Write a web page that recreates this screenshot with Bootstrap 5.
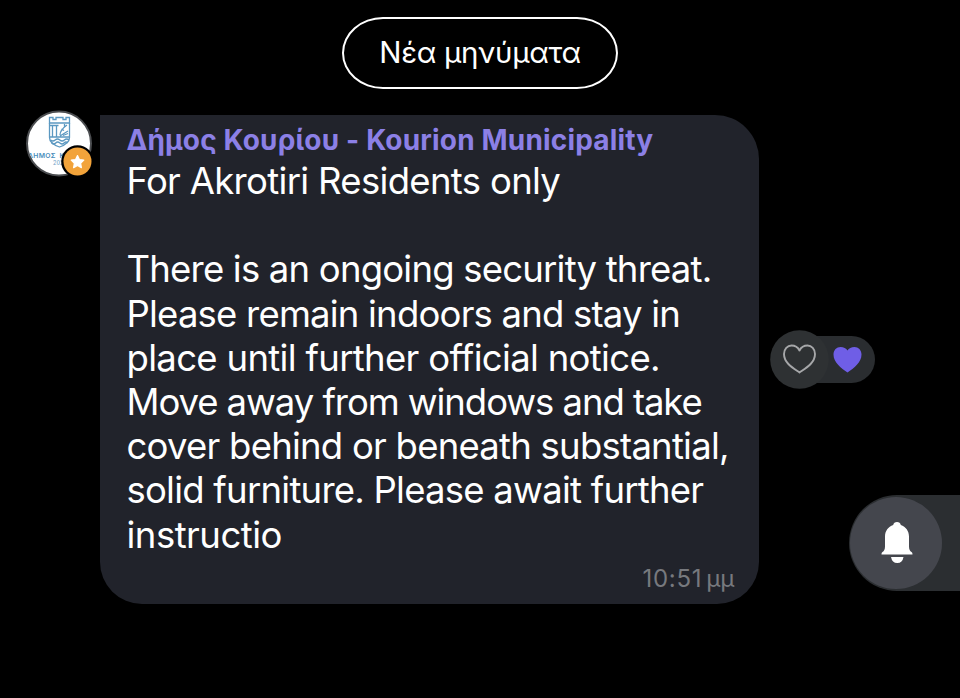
<!DOCTYPE html>
<html lang="el">
<head>
<meta charset="utf-8">
<meta name="viewport" content="width=device-width, initial-scale=1">
<title>Kourion Municipality</title>
<link href="https://cdn.jsdelivr.net/npm/bootstrap@5.3.0/dist/css/bootstrap.min.css" rel="stylesheet">
<style>
body{background:#000;color:#fff;font-family:Inter,"Liberation Sans",sans-serif;width:960px;height:698px;overflow:hidden}
.new-msgs{margin-top:16.5px;width:276px;height:72px;border:2.5px solid #fff;border-radius:41px/36px;font-size:29.5px;line-height:1;letter-spacing:-.3px}
.thread{padding-left:26px;margin-top:26.5px}
.avatar{width:66px;height:68px;margin-top:-5px}
.bubble{margin-left:8.3px;width:658.7px;height:489px;background:#21232b;border-radius:0 44px 42px 42px;padding:5px 24.7px 0 26.2px}
.sender{color:#8c80e6;font-size:28px;font-weight:700;line-height:40px;letter-spacing:.17px}
.message{font-size:36.5px;line-height:44.2px;margin-top:-1px;letter-spacing:-.76px}
.tight-1{letter-spacing:-.79px}
.tight-2{letter-spacing:-1.07px}
.loose-1{letter-spacing:-.68px}
.loose-2{letter-spacing:-.5px}
.stamp{font-size:24px;line-height:30px;color:#77797e;margin-top:7px}
.clock{letter-spacing:.7px;margin-right:4px}
.react{margin-left:11px;margin-top:215px;width:105px}
.side{margin-top:380px;margin-left:-26px}
</style>
<script src="https://cdn.jsdelivr.net/npm/bootstrap@5.3.0/dist/js/bootstrap.bundle.min.js"></script>
</head>
<body>
<main class="d-flex flex-column">
  <div class="new-msgs d-flex align-items-center justify-content-center align-self-center text-nowrap">Νέα μηνύματα</div>
  <section class="thread d-flex align-items-start">
    <svg class="avatar flex-shrink-0" viewBox="0 0 66 68" role="img" aria-label="Δήμος Κουρίου">
      <defs><clipPath id="face"><circle cx="33" cy="33.500" r="31"/></clipPath></defs>
      <circle cx="33" cy="33.500" r="32" fill="#fff" stroke="#4b4d50" stroke-width="2"/>
      <g clip-path="url(#face)">
        <g fill="none" stroke="#5b98c1" stroke-width="1.300">
          <path d="M23.500 13V7.500h3.500v2h3v-2h7v2h3v-2h3.500V13z"/>
          <path d="M23.500 13V27.500q0 6 10 9.500 10-3.500 10-9.500V13"/>
          <path d="M24 15.500h8.500M26.500 16v11M30.500 16v11M34 25q0-5 7-10M35.500 19l2.500 1.500M38.500 14v4M34 26l8-5M37 25.500l5-2M24 27h19M24.500 30q2.400 2 4.700 0t4.600 0 4.600 0 4.600 0M25.500 33q2.300 2 4.200 0t4.200 0 4.200 0 3.500 0"/>
        </g>
        <text x="2" y="47.500" font-size="6.800" font-weight="600" letter-spacing=".35" fill="#4a8dbb">ΔΗΜΟΣ</text>
        <text x="33.500" y="47.500" font-size="6.800" font-weight="600" fill="#4a8dbb">Κ</text>
        <text x="27" y="54.500" font-size="5.500" font-weight="500" fill="#7aa8c9">2024</text>
      </g>
      <circle cx="51.500" cy="51.500" r="16.300" fill="#000"/><circle cx="51.500" cy="51.500" r="14" fill="#f2a33a"/>
      <path d="M51.500 45.500l1.900 4 4.400.6-3.200 3.100.8 4.400-3.900-2.100-3.900 2.100.8-4.400-3.200-3.100 4.400-.6z" fill="#fff" stroke="#fff" stroke-width="1.200" stroke-linejoin="round"/>
    </svg>
    <article class="bubble flex-shrink-0 d-flex flex-column text-nowrap">
      <div class="sender">Δήμος Κουρίου - Kourion Municipality</div>
      <div class="message">
        <span class="loose-1">For Akrotiri Residents only</span><br><br>
        <span class="tight-1">There is an ongoing security threat.</span><br>
        <span class="tight-1">Please remain indoors and stay in</span><br>
        <span class="loose-1">place until further official notice.</span><br>
        <span class="tight-2">Move away from windows and take</span><br>
        cover behind or beneath substantial,<br>
        solid furniture. Please await further<br>
        <span class="loose-2">instructio</span>
      </div>
      <div class="stamp align-self-end d-flex"><span class="clock">10:51</span><span>μμ</span></div>
    </article>
    <svg class="react flex-shrink-0" height="60" viewBox="0 0 105 60">
      <rect x="20" y="6" width="85" height="47" rx="23.500" fill="#2a2d30"/>
      <circle cx="29.500" cy="29.500" r="29.300" fill="#2e3133"/>
      <path d="M29.500 42.500C23 38 14 33 14 24c0-5 3.500-8.500 7.500-8.500 3.500 0 6.500 2 8 5 1.500-3 4.500-5 8-5 4 0 7.500 3.500 7.500 8.500 0 9-9 14-15.500 18.500z" fill="none" stroke="#a6a7a9" stroke-width="1.900" stroke-linejoin="round"/>
      <path d="M77.500 42.500C71 38 63.500 32.500 63.500 24.500c0-4.500 3.200-7.500 7-7.500 3.200 0 5.700 1.500 7 3.500 1.300-2 3.800-3.500 7-3.500 3.800 0 7 3 7 7.500 0 8-7.500 13.500-14 18z" fill="#6f5ee6"/>
    </svg>
    <svg class="side flex-shrink-0" width="111" height="96" viewBox="0 0 111 96">
      <path d="M111 0H48a48 48 0 0 0 0 96h63z" fill="#2b2e31"/>
      <circle cx="47" cy="48" r="46" fill="#44464d"/>
      <path d="M48 27c2 0 3.500 1.200 3.800 3 5 1.700 8.200 6 8.200 11.500v10c0 3 1 4.500 2.500 5.500.8.600 1 1.400 1 2.500h-31c0-1.100.2-1.900 1-2.500 1.500-1 2.500-2.500 2.500-5.500v-10c0-5.500 3.200-9.800 8.200-11.500.3-1.800 1.800-3 3.800-3zM42 62h12.500q-1 6-6.200 6T42 62z" fill="#fff"/>
    </svg>
  </section>
</main>
</body>
</html>
